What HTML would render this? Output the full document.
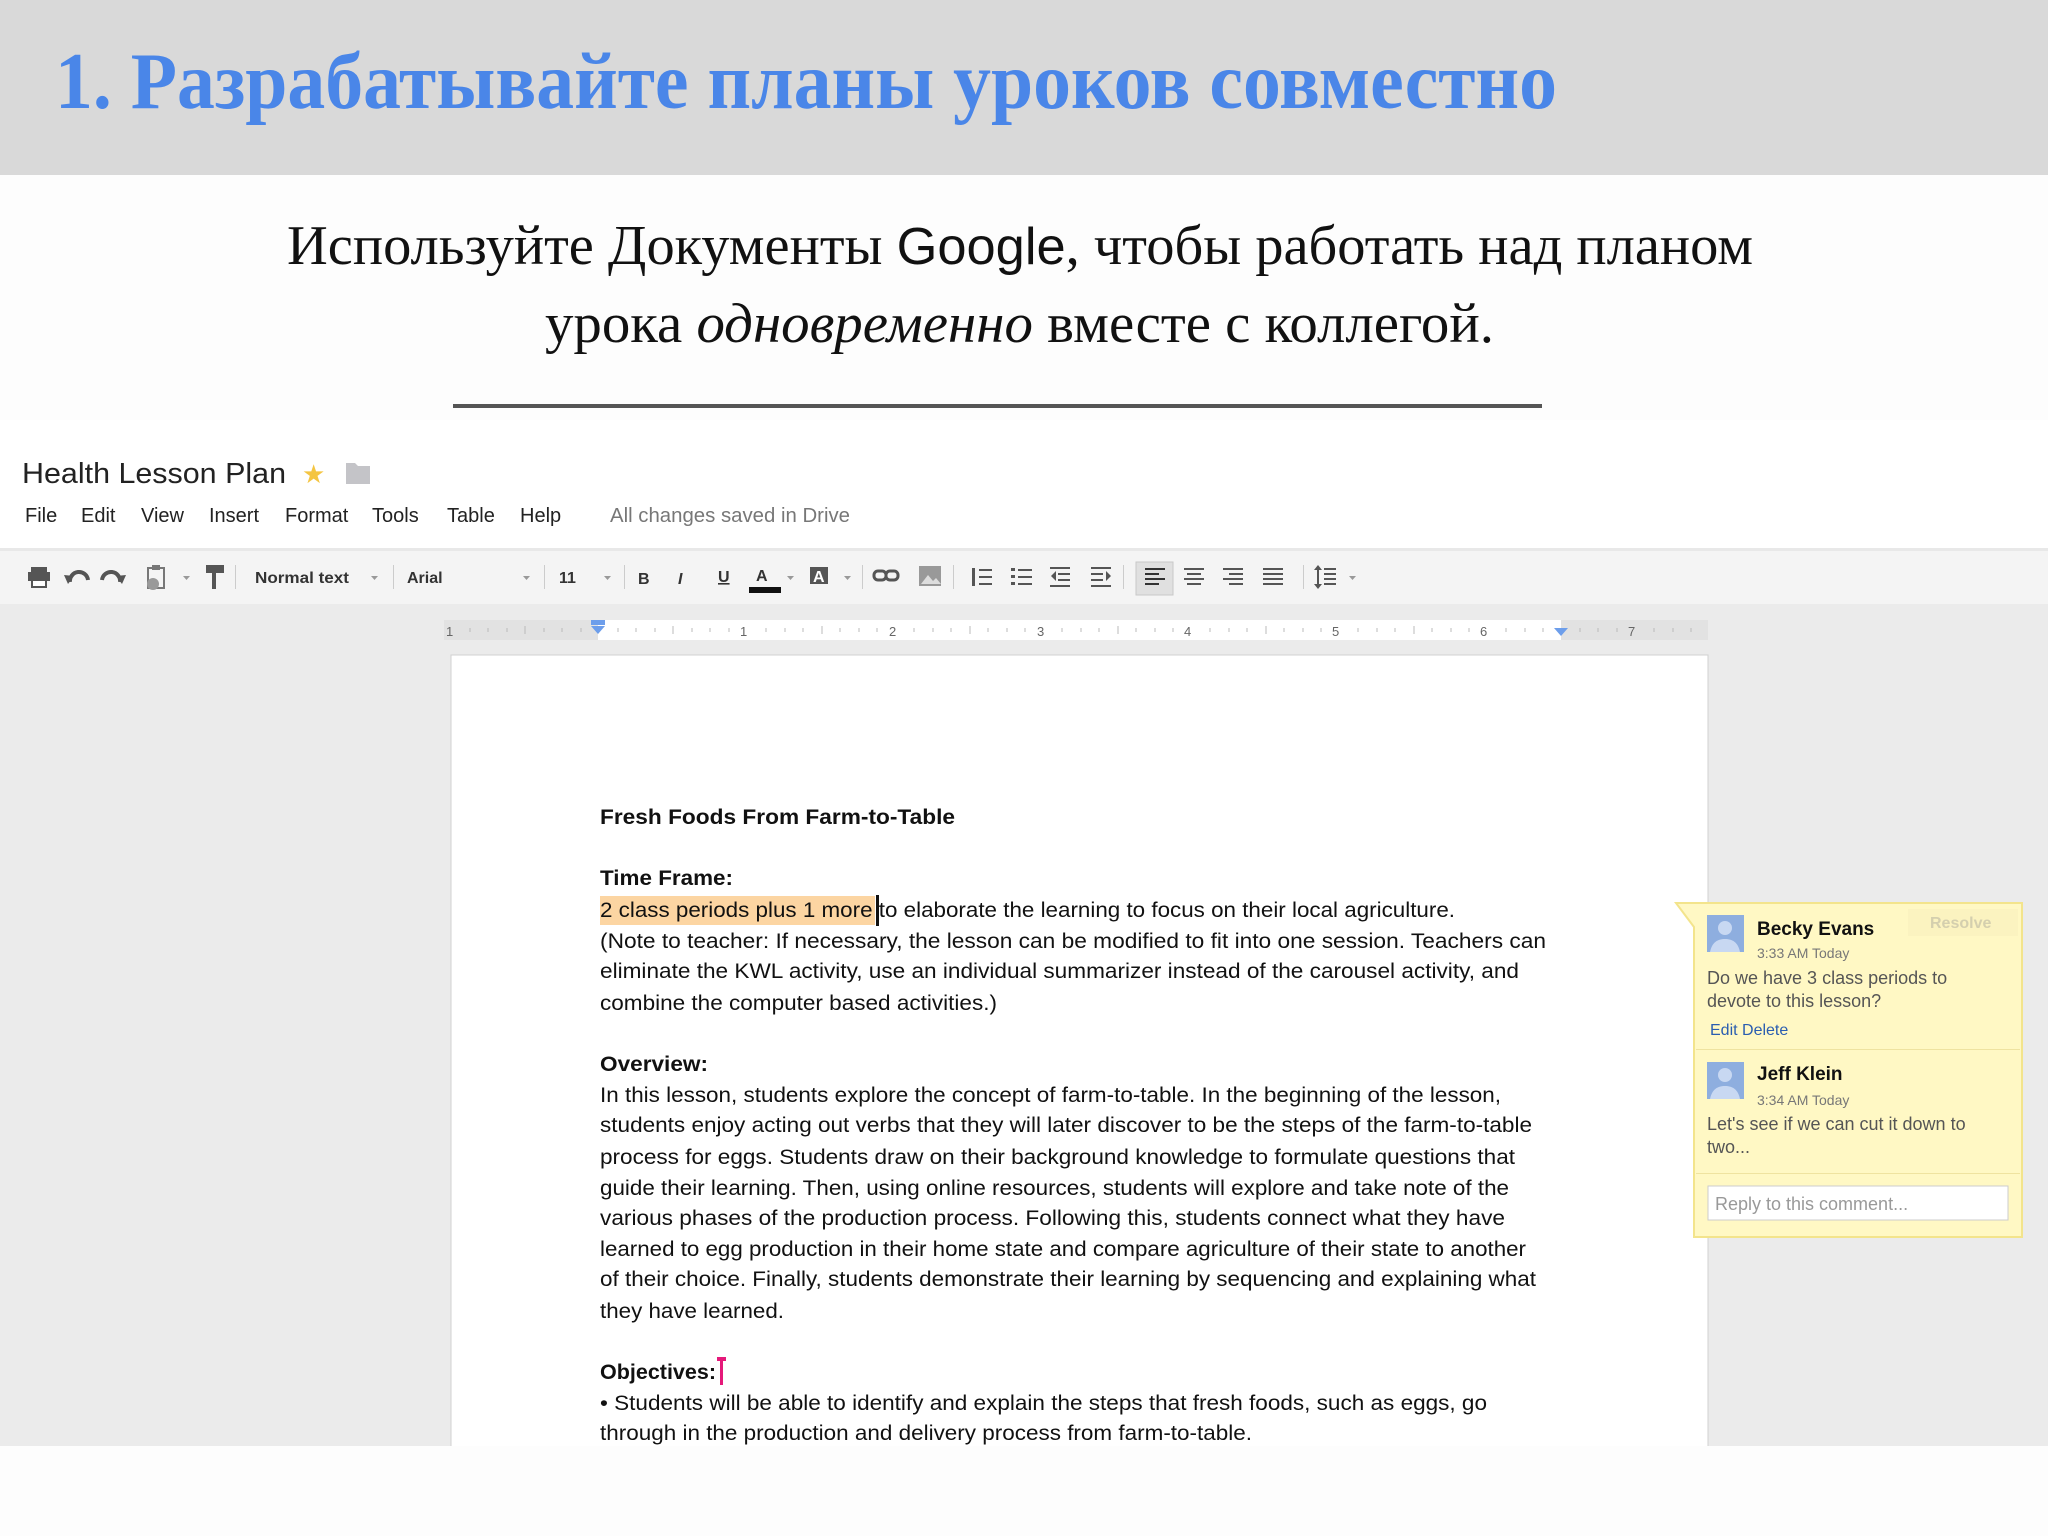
<!DOCTYPE html>
<html><head><meta charset="utf-8"><style>
html,body{margin:0;padding:0;background:#fdfdfd;}
svg{display:block;}
.d{font-family:"Liberation Sans",Arial,sans-serif;font-size:21px;fill:#111;}
.b{font-weight:bold;}
.m{font-family:"Liberation Sans",Arial,sans-serif;font-size:20px;fill:#222;}
.t{font-family:"Liberation Sans",Arial,sans-serif;font-size:16px;fill:#333;font-weight:bold;}
.r{font-family:"Liberation Sans",Arial,sans-serif;font-size:13px;fill:#666;}
.c{font-family:"Liberation Sans",Arial,sans-serif;}
.ic{fill:#555;}
</style></head><body>
<svg width="2048" height="1536" viewBox="0 0 2048 1536" xmlns="http://www.w3.org/2000/svg">
<rect width="2048" height="1536" fill="#fdfdfd"/>
<!-- header -->
<rect width="2048" height="175" fill="#d9d9d9"/>
<text x="55" y="108" font-family="'Liberation Serif',serif" font-weight="bold" font-size="80" fill="#4a86e8" textLength="1502" lengthAdjust="spacingAndGlyphs">1. Разрабатывайте планы уроков совместно</text>
<!-- subtitle -->
<g font-family="'Liberation Serif',serif" font-size="56" fill="#111">
<text x="287" y="264" textLength="1466" lengthAdjust="spacingAndGlyphs">Используйте Документы <tspan font-family="'Liberation Sans',sans-serif" font-size="52">Google</tspan>, чтобы работать над планом</text>
<text x="545" y="342" textLength="949" lengthAdjust="spacingAndGlyphs">урока <tspan font-style="italic">одновременно</tspan> вместе с коллегой.</text>
</g>
<rect x="453" y="404" width="1089" height="4" fill="#555"/>

<!-- docs header -->
<rect x="0" y="420" width="2048" height="130" fill="#ffffff"/>
<text x="22" y="483" class="c" font-size="29" fill="#222" textLength="264" lengthAdjust="spacingAndGlyphs">Health Lesson Plan</text>
<text x="302" y="483" font-size="26" fill="#f4c542" font-family="'DejaVu Sans',sans-serif">★</text>
<path d="M346 463h9l3 3h12v18h-24z" fill="#c4c4c8"/>
<g class="m">
<text x="25" y="522">File</text><text x="81" y="522">Edit</text><text x="141" y="522">View</text>
<text x="209" y="522">Insert</text><text x="285" y="522">Format</text><text x="372" y="522">Tools</text>
<text x="447" y="522">Table</text><text x="520" y="522">Help</text>
<text x="610" y="522" fill="#777" textLength="240" lengthAdjust="spacingAndGlyphs">All changes saved in Drive</text>
</g>
<!-- toolbar -->
<rect x="0" y="548" width="2048" height="3" fill="#e8e8e8"/>
<rect x="0" y="551" width="2048" height="53" fill="#f4f4f4"/>
<rect x="0" y="604" width="2048" height="842" fill="#ebebeb"/>
<g class="ic">
<rect x="31" y="567" width="16" height="5"/><rect x="28" y="572" width="22" height="9"/><rect x="32" y="580" width="14" height="7" fill="#fff" stroke="#555" stroke-width="2"/>
<path d="M70 582 a9 9 0 0 1 18 -2" fill="none" stroke="#555" stroke-width="4"/><path d="M64 575 l10 1 -6 8z"/>
<path d="M120 582 a9 9 0 0 0 -18 -2" fill="none" stroke="#555" stroke-width="4"/><path d="M126 575 l-10 1 6 8z"/>
<rect x="148" y="568" width="16" height="20" fill="none" stroke="#777" stroke-width="2"/><rect x="152" y="565" width="8" height="5" fill="#777"/><circle cx="153" cy="584" r="6" fill="#999"/>
<path d="M183 576h7l-3.5 4z" fill="#999"/>
<rect x="206" y="565" width="18" height="8"/><rect x="212" y="573" width="4" height="16"/>
<rect x="235" y="565" width="1" height="24" fill="#ccc"/>
<text x="255" y="583" class="t" textLength="94" lengthAdjust="spacingAndGlyphs">Normal text</text>
<path d="M371 576h7l-3.5 4z" fill="#999"/>
<rect x="393" y="565" width="1" height="24" fill="#ccc"/>
<text x="407" y="583" class="t">Arial</text>
<path d="M523 576h7l-3.5 4z" fill="#999"/>
<rect x="544" y="565" width="1" height="24" fill="#ccc"/>
<text x="559" y="583" class="t">11</text>
<path d="M604 576h7l-3.5 4z" fill="#999"/>
<rect x="624" y="565" width="1" height="24" fill="#ccc"/>
<text x="638" y="584" class="t" font-size="18">B</text>
<text x="678" y="584" class="t" font-size="18" font-style="italic">I</text>
<text x="718" y="582" class="t" font-size="17" text-decoration="underline">U</text>
<text x="756" y="581" class="t" font-size="18" font-weight="normal">A</text>
<rect x="749" y="587" width="32" height="6" fill="#111"/>
<path d="M787 576h7l-3.5 4z" fill="#999"/>
<rect x="810" y="567" width="18" height="17"/><text x="813" y="582" class="t" font-size="14" fill="#fff" style="fill:#fff">A</text>
<path d="M844 576h7l-3.5 4z" fill="#999"/>
<rect x="862" y="565" width="1" height="24" fill="#ccc"/>
<rect x="874" y="571" width="12" height="9" rx="4" fill="none" stroke="#555" stroke-width="3"/><rect x="886" y="571" width="12" height="9" rx="4" fill="none" stroke="#555" stroke-width="3"/>
<rect x="919" y="566" width="22" height="20" fill="#999"/><path d="M921 584l7-9 5 6 3-3 5 6z" fill="#ddd"/>
<rect x="953" y="565" width="1" height="24" fill="#ccc"/>
<g fill="#555"><rect x="972" y="568" width="3" height="18"/><rect x="979" y="569" width="13" height="2"/><rect x="979" y="576" width="13" height="2"/><rect x="979" y="583" width="13" height="2"/>
<rect x="1011" y="568" width="4" height="3"/><rect x="1011" y="575" width="4" height="3"/><rect x="1011" y="582" width="4" height="3"/><rect x="1018" y="569" width="14" height="2"/><rect x="1018" y="576" width="14" height="2"/><rect x="1018" y="583" width="14" height="2"/>
<rect x="1050" y="567" width="20" height="2"/><rect x="1058" y="573" width="12" height="2"/><rect x="1058" y="579" width="12" height="2"/><rect x="1050" y="585" width="20" height="2"/><path d="M1056 571v10l-5-5z"/>
<rect x="1091" y="567" width="20" height="2"/><rect x="1091" y="573" width="12" height="2"/><rect x="1091" y="579" width="12" height="2"/><rect x="1091" y="585" width="20" height="2"/><path d="M1106 571v10l5-5z"/>
</g>
<rect x="1123" y="565" width="1" height="24" fill="#ccc"/>
<rect x="1136" y="562" width="37" height="33" fill="#e0e0e0" stroke="#c8c8c8"/>
<g fill="#333"><rect x="1145" y="568" width="20" height="2"/><rect x="1145" y="573" width="14" height="2"/><rect x="1145" y="578" width="20" height="2"/><rect x="1145" y="583" width="14" height="2"/></g>
<g fill="#555"><rect x="1184" y="568" width="20" height="2"/><rect x="1187" y="573" width="14" height="2"/><rect x="1184" y="578" width="20" height="2"/><rect x="1187" y="583" width="14" height="2"/>
<rect x="1223" y="568" width="20" height="2"/><rect x="1229" y="573" width="14" height="2"/><rect x="1223" y="578" width="20" height="2"/><rect x="1229" y="583" width="14" height="2"/>
<rect x="1263" y="568" width="20" height="2"/><rect x="1263" y="573" width="20" height="2"/><rect x="1263" y="578" width="20" height="2"/><rect x="1263" y="583" width="20" height="2"/></g>
<rect x="1303" y="565" width="1" height="24" fill="#ccc"/>
<g fill="#555"><rect x="1317" y="567" width="2" height="20"/><path d="M1314 570l4-5 4 5zM1314 584l4 5 4-5z"/><rect x="1324" y="568" width="12" height="2"/><rect x="1324" y="573" width="12" height="2"/><rect x="1324" y="578" width="12" height="2"/><rect x="1324" y="583" width="12" height="2"/></g>
<path d="M1349 576h7l-3.5 4z" fill="#999"/>
</g>

<!-- ruler -->
<rect x="444" y="620" width="1264" height="20" fill="#e2e2e2"/>
<rect x="598" y="620" width="963" height="20" fill="#ffffff"/>
<g class="r">
<text x="446" y="636">1</text><text x="740" y="636">1</text><text x="889" y="636">2</text><text x="1037" y="636">3</text><text x="1184" y="636">4</text><text x="1332" y="636">5</text><text x="1480" y="636">6</text><text x="1628" y="636">7</text>
</g>
<g stroke="#bbb" stroke-width="1">
<path d="M470 628v4M488 628v4M507 628v4M525 626v8M544 628v4M562 628v4M581 628v4M618 628v4M636 628v4M655 628v4M673 626v8M692 628v4M710 628v4M729 628v4M766 628v4M785 628v4M803 628v4M822 626v8M840 628v4M859 628v4M877 628v4M914 628v4M933 628v4M951 628v4M970 626v8M988 628v4M1007 628v4M1025 628v4M1062 628v4M1081 628v4M1099 628v4M1118 626v8M1136 628v4M1155 628v4M1173 628v4M1210 628v4M1229 628v4M1247 628v4M1266 626v8M1284 628v4M1303 628v4M1321 628v4M1358 628v4M1377 628v4M1395 628v4M1414 626v8M1432 628v4M1451 628v4M1469 628v4M1506 628v4M1525 628v4M1543 628v4M1580 628v4M1598 628v4M1617 628v4M1654 628v4M1673 628v4M1691 628v4"/>
</g>
<rect x="591" y="620" width="14" height="5" fill="#6d9eeb"/><path d="M591 626h14l-7 8z" fill="#6d9eeb"/>
<path d="M1554 628h14l-7 8z" fill="#6d9eeb"/>

<!-- page -->
<rect x="451" y="655" width="1257" height="800" fill="#ffffff" stroke="#d0d0d0"/>
<rect x="600" y="896" width="275" height="29" fill="#fcd5a2"/>
<rect x="876" y="895" width="3" height="31" fill="#111"/>
<rect x="720" y="1357" width="3" height="28" fill="#e5197a"/><rect x="717" y="1357" width="9" height="4" fill="#e5197a"/>
<g class="d">
<text x="600" y="824" class="b" textLength="355" lengthAdjust="spacingAndGlyphs">Fresh Foods From Farm-to-Table</text>
<text x="600" y="885" class="b" textLength="133" lengthAdjust="spacingAndGlyphs">Time Frame:</text>
<text x="600" y="917" textLength="855" lengthAdjust="spacingAndGlyphs">2 class periods plus 1 more to elaborate the learning to focus on their local agriculture.</text>
<text x="600" y="948" textLength="946" lengthAdjust="spacingAndGlyphs">(Note to teacher: If necessary, the lesson can be modified to fit into one session. Teachers can</text>
<text x="600" y="978" textLength="919" lengthAdjust="spacingAndGlyphs">eliminate the KWL activity, use an individual summarizer instead of the carousel activity, and</text>
<text x="600" y="1010" textLength="397" lengthAdjust="spacingAndGlyphs">combine the computer based activities.)</text>
<text x="600" y="1071" class="b" textLength="108" lengthAdjust="spacingAndGlyphs">Overview:</text>
<text x="600" y="1102" textLength="901" lengthAdjust="spacingAndGlyphs">In this lesson, students explore the concept of farm-to-table. In the beginning of the lesson,</text>
<text x="600" y="1132" textLength="932" lengthAdjust="spacingAndGlyphs">students enjoy acting out verbs that they will later discover to be the steps of the farm-to-table</text>
<text x="600" y="1164" textLength="915" lengthAdjust="spacingAndGlyphs">process for eggs. Students draw on their background knowledge to formulate questions that</text>
<text x="600" y="1195" textLength="909" lengthAdjust="spacingAndGlyphs">guide their learning. Then, using online resources, students will explore and take note of the</text>
<text x="600" y="1225" textLength="905" lengthAdjust="spacingAndGlyphs">various phases of the production process. Following this, students connect what they have</text>
<text x="600" y="1256" textLength="926" lengthAdjust="spacingAndGlyphs">learned to egg production in their home state and compare agriculture of their state to another</text>
<text x="600" y="1286" textLength="936" lengthAdjust="spacingAndGlyphs">of their choice. Finally, students demonstrate their learning by sequencing and explaining what</text>
<text x="600" y="1318" textLength="184" lengthAdjust="spacingAndGlyphs">they have learned.</text>
<text x="600" y="1379" class="b" textLength="116" lengthAdjust="spacingAndGlyphs">Objectives:</text>
<text x="600" y="1410" textLength="887" lengthAdjust="spacingAndGlyphs">• Students will be able to identify and explain the steps that fresh foods, such as eggs, go</text>
<text x="600" y="1440" textLength="652" lengthAdjust="spacingAndGlyphs">through in the production and delivery process from farm-to-table.</text>
</g>
<rect x="0" y="1446" width="2048" height="90" fill="#fdfdfd"/>

<!-- comment -->
<path d="M1676 903H2022V1237H1694V927z" fill="#fff8c4" stroke="#f3e48c" stroke-width="2"/>
<rect x="1908" y="909" width="110" height="27" fill="#fbf3c0"/>
<text x="1930" y="928" class="c" font-size="16" font-weight="bold" fill="#d4cfae">Resolve</text>
<rect x="1707" y="915" width="37" height="37" fill="#8eaedf"/>
<circle cx="1725" cy="928" r="7" fill="#c8d8f2"/><path d="M1710 952c2-10 8-13 15-13s13 3 15 13z" fill="#c8d8f2"/>
<text x="1757" y="935" class="c" font-size="19" font-weight="bold" fill="#111">Becky Evans</text>
<text x="1757" y="958" class="c" font-size="14" fill="#777">3:33 AM Today</text>
<text x="1707" y="984" class="c" font-size="18" fill="#555">Do we have 3 class periods to</text>
<text x="1707" y="1007" class="c" font-size="18" fill="#555">devote to this lesson?</text>
<text x="1710" y="1035" class="c" font-size="16" fill="#2a5db0">Edit Delete</text>
<rect x="1696" y="1049" width="324" height="1" fill="#efe3a0"/>
<rect x="1707" y="1062" width="37" height="37" fill="#8eaedf"/>
<circle cx="1725" cy="1075" r="7" fill="#c8d8f2"/><path d="M1710 1099c2-10 8-13 15-13s13 3 15 13z" fill="#c8d8f2"/>
<text x="1757" y="1080" class="c" font-size="19" font-weight="bold" fill="#111">Jeff Klein</text>
<text x="1757" y="1105" class="c" font-size="14" fill="#777">3:34 AM Today</text>
<text x="1707" y="1130" class="c" font-size="18" fill="#555">Let's see if we can cut it down to</text>
<text x="1707" y="1153" class="c" font-size="18" fill="#555">two...</text>
<rect x="1696" y="1173" width="324" height="1" fill="#efe3a0"/>
<rect x="1708" y="1186" width="300" height="34" fill="#fff" stroke="#ccc"/>
<text x="1715" y="1210" class="c" font-size="18" fill="#999">Reply to this comment...</text>
</svg>
</body></html>
